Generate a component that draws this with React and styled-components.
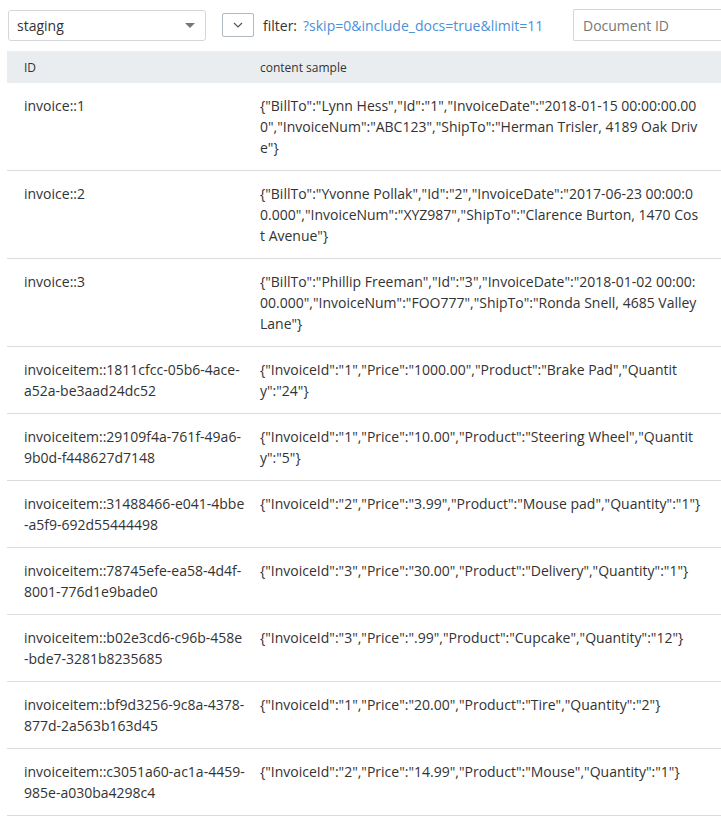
import React from "react";
import styled, { createGlobalStyle } from "styled-components";

const GlobalStyle = createGlobalStyle`
  body {
    margin: 0;
    background: #fff;
    font-family: "Open Sans", "Liberation Sans", sans-serif;
    color: #333;
  }
`;

const Page = styled.div`
  padding: 9px 0 0 7px;
  overflow: hidden;
  width: 721px;
  box-sizing: border-box;
`;

const Toolbar = styled.div`
  display: flex;
  align-items: center;
  height: 32px;
  padding-left: 1px;
`;

const Select = styled.div`
  width: 198px;
  height: 31px;
  box-sizing: border-box;
  border: 1px solid #d6d6d6;
  border-radius: 3px;
  display: flex;
  align-items: center;
  justify-content: space-between;
  padding: 0 10px 0 8px;
  font-size: 14px;
  color: #333;
`;

const Caret = styled.span`
  width: 0;
  height: 0;
  border-left: 5px solid transparent;
  border-right: 5px solid transparent;
  border-top: 5px solid #777;
`;

const ToggleButton = styled.button`
  margin-left: 16px;
  width: 32px;
  height: 24px;
  border: 1px solid #b0b8c0;
  border-radius: 2px;
  background: #fff;
  display: flex;
  align-items: center;
  justify-content: center;
  padding: 0;
`;

const FilterLabel = styled.span`
  margin-left: 9px;
  font-size: 14px;
  color: #333;
`;

const FilterLink = styled.span`
  margin-left: 6px;
  font-size: 14px;
  color: #4a90d9;
`;

const DocInput = styled.div`
  margin-left: auto;
  width: 160px;
  height: 32px;
  box-sizing: border-box;
  border: 1px solid #d6d6d6;
  border-right: none;
  border-radius: 2px 0 0 2px;
  display: flex;
  align-items: center;
  padding-left: 9px;
  font-size: 14px;
  color: #777;
  margin-right: -12px;
`;

const Table = styled.div`
  margin-top: 10px;
`;

const Row = styled.div`
  display: grid;
  grid-template-columns: 245px 1fr;
  border-bottom: 1px solid #dcdcdc;
  font-size: 14px;
  line-height: 21px;
  color: #333;
`;

const HeaderRow = styled(Row)`
  background: #eaedf0;
  border-bottom: none;
  font-size: 12px;
  height: 32px;
  align-items: center;
`;

const Cell = styled.div`
  padding: ${(p) => (p.$head ? "0" : "12px")} ${(p) => (p.$wide ? "18px" : "6px")}
    ${(p) => (p.$head ? "0" : "12px")} ${(p) => (p.$wide ? "8px" : "17px")};
  word-break: break-all;
`;

const rows = [
  ["invoice::1", '{"BillTo":"Lynn Hess","Id":"1","InvoiceDate":"2018-01-15 00:00:00.000","InvoiceNum":"ABC123","ShipTo":"Herman Trisler, 4189 Oak Drive"}'],
  ["invoice::2", '{"BillTo":"Yvonne Pollak","Id":"2","InvoiceDate":"2017-06-23 00:00:00.000","InvoiceNum":"XYZ987","ShipTo":"Clarence Burton, 1470 Cost Avenue"}'],
  ["invoice::3", '{"BillTo":"Phillip Freeman","Id":"3","InvoiceDate":"2018-01-02 00:00:00.000","InvoiceNum":"FOO777","ShipTo":"Ronda Snell, 4685 Valley Lane"}'],
  ["invoiceitem::1811cfcc-05b6-4ace-a52a-be3aad24dc52", '{"InvoiceId":"1","Price":"1000.00","Product":"Brake Pad","Quantity":"24"}'],
  ["invoiceitem::29109f4a-761f-49a6-9b0d-f448627d7148", '{"InvoiceId":"1","Price":"10.00","Product":"Steering Wheel","Quantity":"5"}'],
  ["invoiceitem::31488466-e041-4bbe-a5f9-692d55444498", '{"InvoiceId":"2","Price":"3.99","Product":"Mouse pad","Quantity":"1"}'],
  ["invoiceitem::78745efe-ea58-4d4f-8001-776d1e9bade0", '{"InvoiceId":"3","Price":"30.00","Product":"Delivery","Quantity":"1"}'],
  ["invoiceitem::b02e3cd6-c96b-458e-bde7-3281b8235685", '{"InvoiceId":"3","Price":".99","Product":"Cupcake","Quantity":"12"}'],
  ["invoiceitem::bf9d3256-9c8a-4378-877d-2a563b163d45", '{"InvoiceId":"1","Price":"20.00","Product":"Tire","Quantity":"2"}'],
  ["invoiceitem::c3051a60-ac1a-4459-985e-a030ba4298c4", '{"InvoiceId":"2","Price":"14.99","Product":"Mouse","Quantity":"1"}'],
];

export default function App() {
  return (
    <Page>
      <GlobalStyle />
      <Toolbar>
        <Select>
          staging
          <Caret />
        </Select>
        <ToggleButton>
          <svg width="10" height="6" viewBox="0 0 10 6">
            <path d="M1 1l4 4 4-4" fill="none" stroke="#555" strokeWidth="1.2" />
          </svg>
        </ToggleButton>
        <FilterLabel>filter:</FilterLabel>
        <FilterLink>?skip=0&amp;include_docs=true&amp;limit=11</FilterLink>
        <DocInput>Document ID</DocInput>
      </Toolbar>
      <Table>
        <HeaderRow>
          <Cell $head>ID</Cell>
          <Cell $head $wide>content sample</Cell>
        </HeaderRow>
        {rows.map(([id, content]) => (
          <Row key={id}>
            <Cell>{id}</Cell>
            <Cell $wide>{content}</Cell>
          </Row>
        ))}
      </Table>
    </Page>
  );
}
